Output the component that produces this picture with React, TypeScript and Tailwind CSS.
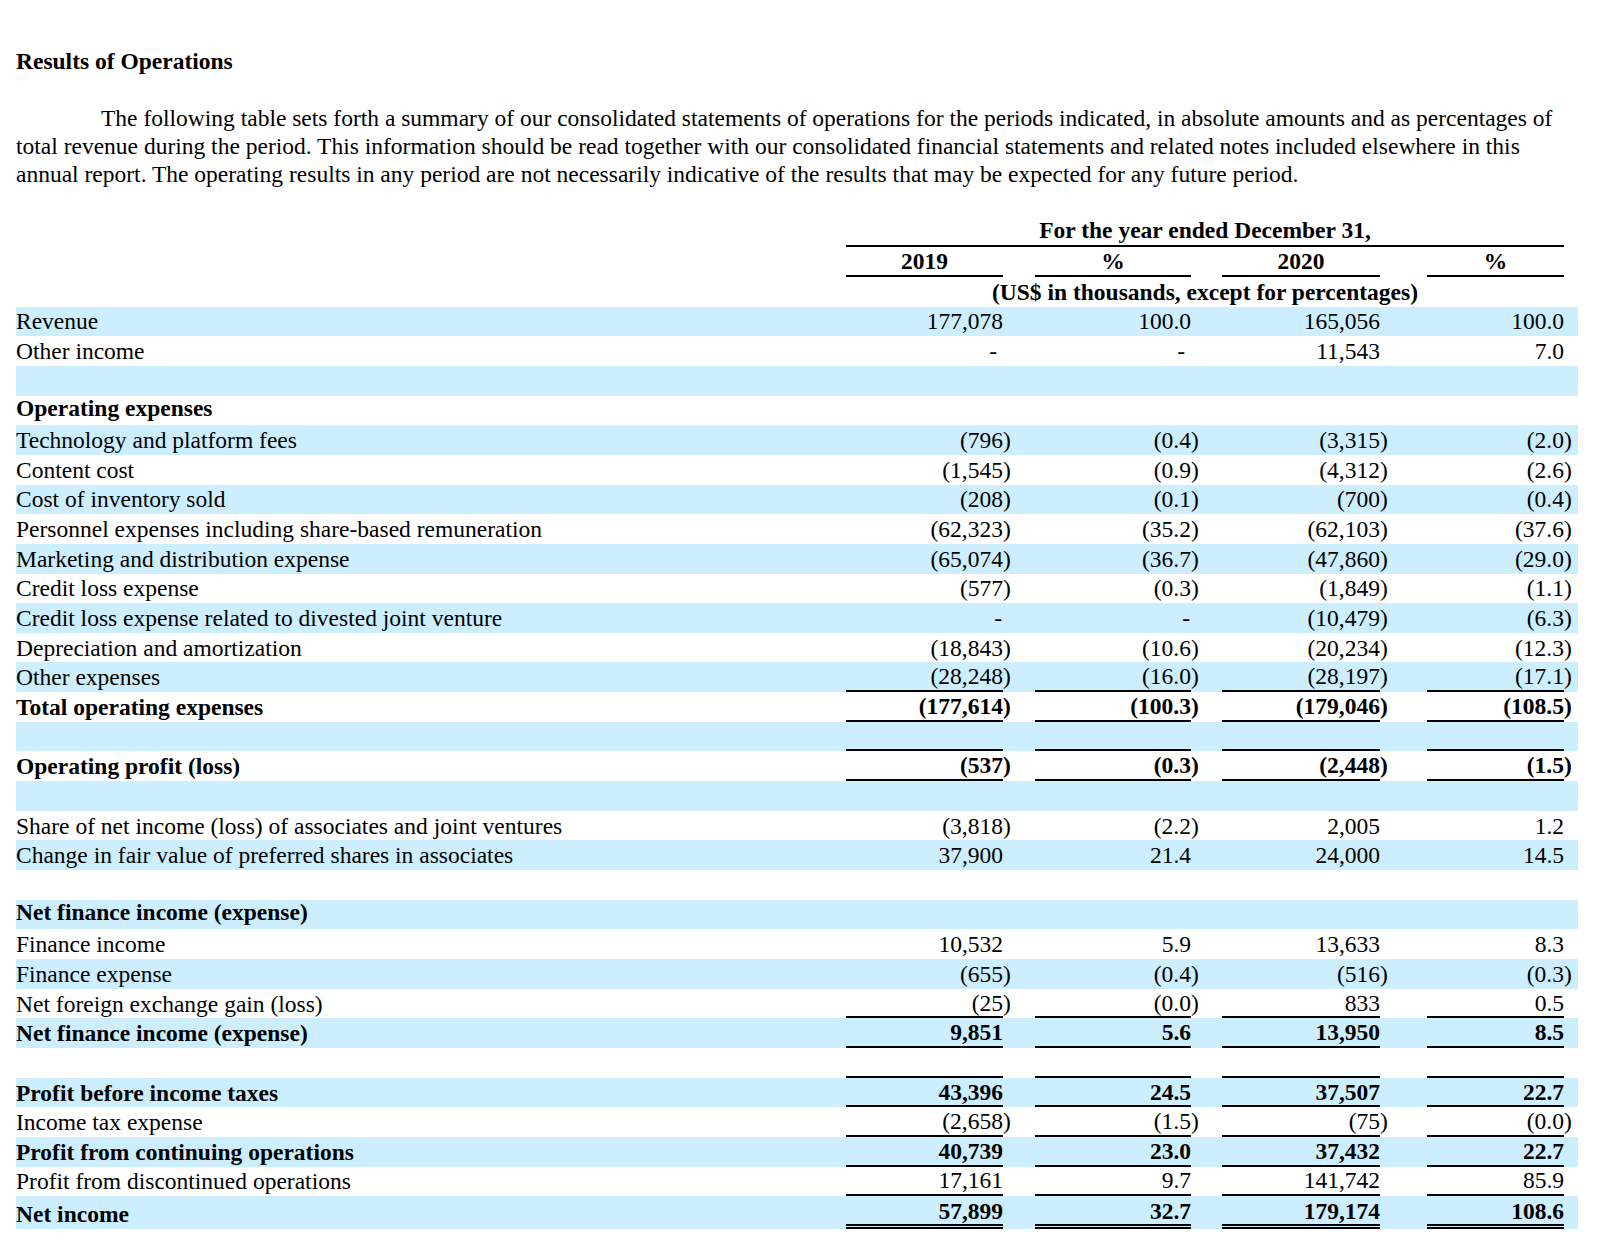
import type { JSX } from 'react'

type Row = {
  label?: string
  values?: string[]
  bold?: boolean
  boldLabelOnly?: boolean
  line?: 'single' | 'double'
  dashPad?: string
}

const rows: Row[] = [
  { label: 'Revenue', values: ['177,078', '100.0', '165,056', '100.0'] },
  { label: 'Other income', values: ['-', '-', '11,543', '7.0'], dashPad: 'pr-[6px]' },
  {},
  { label: 'Operating expenses', boldLabelOnly: true },
  { label: 'Technology and platform fees', values: ['(796)', '(0.4)', '(3,315)', '(2.0)'] },
  { label: 'Content cost', values: ['(1,545)', '(0.9)', '(4,312)', '(2.6)'] },
  { label: 'Cost of inventory sold', values: ['(208)', '(0.1)', '(700)', '(0.4)'] },
  {
    label: 'Personnel expenses including share-based remuneration',
    values: ['(62,323)', '(35.2)', '(62,103)', '(37.6)'],
  },
  { label: 'Marketing and distribution expense', values: ['(65,074)', '(36.7)', '(47,860)', '(29.0)'] },
  { label: 'Credit loss expense', values: ['(577)', '(0.3)', '(1,849)', '(1.1)'] },
  {
    label: 'Credit loss expense related to divested joint venture',
    values: ['-', '-', '(10,479)', '(6.3)'],
    dashPad: 'pr-[1px]',
  },
  { label: 'Depreciation and amortization', values: ['(18,843)', '(10.6)', '(20,234)', '(12.3)'] },
  { label: 'Other expenses', values: ['(28,248)', '(16.0)', '(28,197)', '(17.1)'], line: 'single' },
  {
    label: 'Total operating expenses',
    values: ['(177,614)', '(100.3)', '(179,046)', '(108.5)'],
    bold: true,
    line: 'single',
  },
  { values: ['', '', '', ''], line: 'single' },
  { label: 'Operating profit (loss)', values: ['(537)', '(0.3)', '(2,448)', '(1.5)'], bold: true, line: 'single' },
  {},
  {
    label: 'Share of net income (loss) of associates and joint ventures',
    values: ['(3,818)', '(2.2)', '2,005', '1.2'],
  },
  { label: 'Change in fair value of preferred shares in associates', values: ['37,900', '21.4', '24,000', '14.5'] },
  {},
  { label: 'Net finance income (expense)', boldLabelOnly: true },
  { label: 'Finance income', values: ['10,532', '5.9', '13,633', '8.3'] },
  { label: 'Finance expense', values: ['(655)', '(0.4)', '(516)', '(0.3)'] },
  { label: 'Net foreign exchange gain (loss)', values: ['(25)', '(0.0)', '833', '0.5'], line: 'single' },
  { label: 'Net finance income (expense)', values: ['9,851', '5.6', '13,950', '8.5'], bold: true, line: 'single' },
  { values: ['', '', '', ''], line: 'single' },
  { label: 'Profit before income taxes', values: ['43,396', '24.5', '37,507', '22.7'], bold: true, line: 'single' },
  { label: 'Income tax expense', values: ['(2,658)', '(1.5)', '(75)', '(0.0)'], line: 'single' },
  {
    label: 'Profit from continuing operations',
    values: ['40,739', '23.0', '37,432', '22.7'],
    bold: true,
    line: 'single',
  },
  { label: 'Profit from discontinued operations', values: ['17,161', '9.7', '141,742', '85.9'], line: 'single' },
  { label: 'Net income', values: ['57,899', '32.7', '179,174', '108.6'], bold: true, line: 'double' },
]

// label | 2019 | gap | % | gap | 2020 | gap | % | gap
const gridCols = 'grid grid-rows-1 grid-cols-[830px_157px_32px_156px_31px_158px_47px_137px_14px]'
const valueCols = ['col-start-2', 'col-start-4', 'col-start-6', 'col-start-8']

function Amount({ text, dashPad }: { text: string; dashPad?: string }): JSX.Element {
  // closing paren hangs past the column edge, like the filing does
  if (text.endsWith(')')) {
    return (
      <span className="whitespace-nowrap">
        {text.slice(0, -1)}
        <span className="inline-block w-0 overflow-visible">)</span>
      </span>
    )
  }
  if (text === '-') return <span className={dashPad}>-</span>
  return <span>{text}</span>
}

function TableRow({ row, shaded }: { row: Row; shaded: boolean }): JSX.Element {
  const isDouble = row.line === 'double'
  const lineCls = isDouble
    ? 'border-b-[5px] border-double border-black pt-[2px]'
    : row.line === 'single'
      ? 'border-b-2 border-black'
      : ''
  const labelPad = row.boldLabelOnly ? 'pb-[5px]' : isDouble ? 'pt-[3px]' : ''
  return (
    <div className={`${gridCols} ${isDouble ? 'h-[33px]' : 'h-[29.67px]'} ${shaded ? 'bg-[#cceeff]' : ''}`}>
      <div
        className={`col-start-1 row-start-1 flex items-center whitespace-nowrap ${labelPad} ${
          row.bold || row.boldLabelOnly ? 'font-bold' : ''
        }`}
      >
        {row.label}
      </div>
      {row.values?.map((v, i) => (
        <div
          key={i}
          className={`${valueCols[i]} row-start-1 flex items-center justify-end ${lineCls} ${
            row.bold ? 'font-bold' : ''
          }`}
        >
          <Amount text={v} dashPad={row.dashPad} />
        </div>
      ))}
    </div>
  )
}

export default function App(): JSX.Element {
  return (
    <div className="min-h-[1249px] bg-white px-4 pt-[47px] font-['Liberation_Serif',serif] text-[23.5px] text-black">
      <h2 className="font-bold leading-[28px]">Results of Operations</h2>
      <p className="mt-[29px] w-[1562px] indent-[85px] leading-[28.2px]">
        The following table sets forth a summary of our consolidated statements of operations for the periods
        indicated, in absolute amounts and as percentages of total revenue during the period. This information should
        be read together with our consolidated financial statements and related notes included elsewhere in this
        annual report. The operating results in any period are not necessarily indicative of the results that may be
        expected for any future period.
      </p>

      <div className="mt-[27px] w-[1562px] leading-[26px]">
        <div className={`${gridCols} h-[31px] font-bold`}>
          <div className="col-span-7 col-start-2 row-start-1 flex items-center justify-center border-b-2 border-black">
            For the year ended December 31,
          </div>
        </div>
        <div className={`${gridCols} h-[30px] font-bold`}>
          {['2019', '%', '2020', '%'].map((h, i) => (
            <div
              key={i}
              className={`${valueCols[i]} row-start-1 flex items-center justify-center border-b-2 border-black`}
            >
              {h}
            </div>
          ))}
        </div>
        <div className={`${gridCols} h-[30px] font-bold`}>
          <div className="col-span-7 col-start-2 row-start-1 flex items-center justify-center">
            (US$ in thousands, except for percentages)
          </div>
        </div>

        {rows.map((r, i) => (
          <TableRow key={i} row={r} shaded={i % 2 === 0} />
        ))}
      </div>
    </div>
  )
}
